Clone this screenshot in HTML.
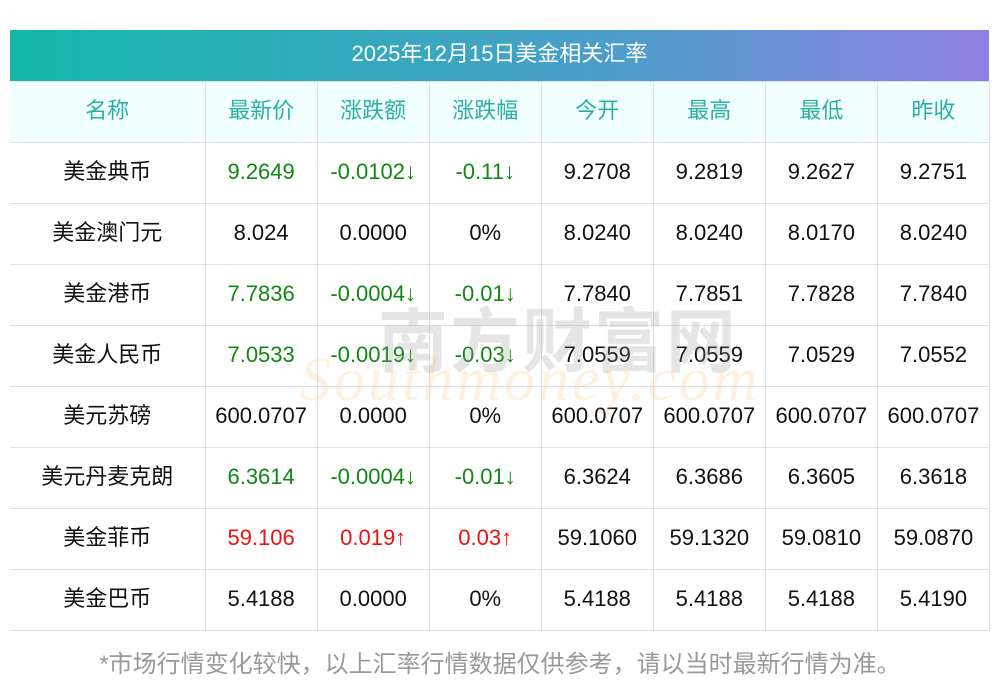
<!DOCTYPE html>
<html><head><meta charset="utf-8"><style>
body{margin:0;width:1000px;height:697px;background:#fff;font-family:"Liberation Sans","Noto Sans CJK SC",sans-serif;position:relative;overflow:hidden}
.title{position:absolute;left:10px;top:30px;width:979px;height:51px;background:linear-gradient(90deg,#13b8a9,#4a9fc9 60%,#8f80e2);color:#fff;font-size:22px;text-align:center;line-height:48px}
table{position:absolute;left:10px;top:81px;border-collapse:collapse;width:980px;table-layout:fixed}
tr{height:61px}
td,th{border:1px solid #e0e0ea;text-align:center;font-size:22px;font-weight:normal;padding:0 0 3px 0;line-height:22px;color:#111;box-sizing:border-box}
tr:first-child td{border-top:none}
td:first-child,th:first-child{border-left:none}
td:last-child,th:last-child{border-right:1px solid #e0e0ea}
th{background:#f0fefe;color:#2ab0a2}
.g{color:#118811}.r{color:#ee1111}
.foot{position:absolute;top:650px;left:0;width:1000px;text-align:center;color:#999;font-size:24px;line-height:30px}
.wm1{position:absolute;left:378px;top:286px;font-size:70px;color:rgba(150,150,150,.25);letter-spacing:2px;font-weight:bold;font-family:"Noto Sans CJK SC",sans-serif}
.wm2{position:absolute;left:300px;top:345px;font-size:62px;color:rgba(255,190,110,.22);font-style:italic;font-family:"Liberation Serif",serif;letter-spacing:3px}
</style></head><body>
<div class="title">2025年12月15日美金相关汇率</div>
<table>
<colgroup><col style="width:195px"><col style="width:112px"><col style="width:112px"><col style="width:112px"><col style="width:112px"><col style="width:112px"><col style="width:112px"><col style="width:112px"></colgroup>
<tr><th>名称</th><th>最新价</th><th>涨跌额</th><th>涨跌幅</th><th>今开</th><th>最高</th><th>最低</th><th>昨收</th></tr>
<tr><td>美金典币</td><td class="g">9.2649</td><td class="g">-0.0102↓</td><td class="g">-0.11↓</td><td>9.2708</td><td>9.2819</td><td>9.2627</td><td>9.2751</td></tr>
<tr><td>美金澳门元</td><td>8.024</td><td>0.0000</td><td>0%</td><td>8.0240</td><td>8.0240</td><td>8.0170</td><td>8.0240</td></tr>
<tr><td>美金港币</td><td class="g">7.7836</td><td class="g">-0.0004↓</td><td class="g">-0.01↓</td><td>7.7840</td><td>7.7851</td><td>7.7828</td><td>7.7840</td></tr>
<tr><td>美金人民币</td><td class="g">7.0533</td><td class="g">-0.0019↓</td><td class="g">-0.03↓</td><td>7.0559</td><td>7.0559</td><td>7.0529</td><td>7.0552</td></tr>
<tr><td>美元苏磅</td><td>600.0707</td><td>0.0000</td><td>0%</td><td>600.0707</td><td>600.0707</td><td>600.0707</td><td>600.0707</td></tr>
<tr><td>美元丹麦克朗</td><td class="g">6.3614</td><td class="g">-0.0004↓</td><td class="g">-0.01↓</td><td>6.3624</td><td>6.3686</td><td>6.3605</td><td>6.3618</td></tr>
<tr><td>美金菲币</td><td class="r">59.106</td><td class="r">0.019↑</td><td class="r">0.03↑</td><td>59.1060</td><td>59.1320</td><td>59.0810</td><td>59.0870</td></tr>
<tr><td>美金巴币</td><td>5.4188</td><td>0.0000</td><td>0%</td><td>5.4188</td><td>5.4188</td><td>5.4188</td><td>5.4190</td></tr>
</table>
<div class="wm1">南方财富网</div>
<div class="wm2">Southmoney.com</div>
<div class="foot">*市场行情变化较快，以上汇率行情数据仅供参考，请以当时最新行情为准。</div>
</body></html>
